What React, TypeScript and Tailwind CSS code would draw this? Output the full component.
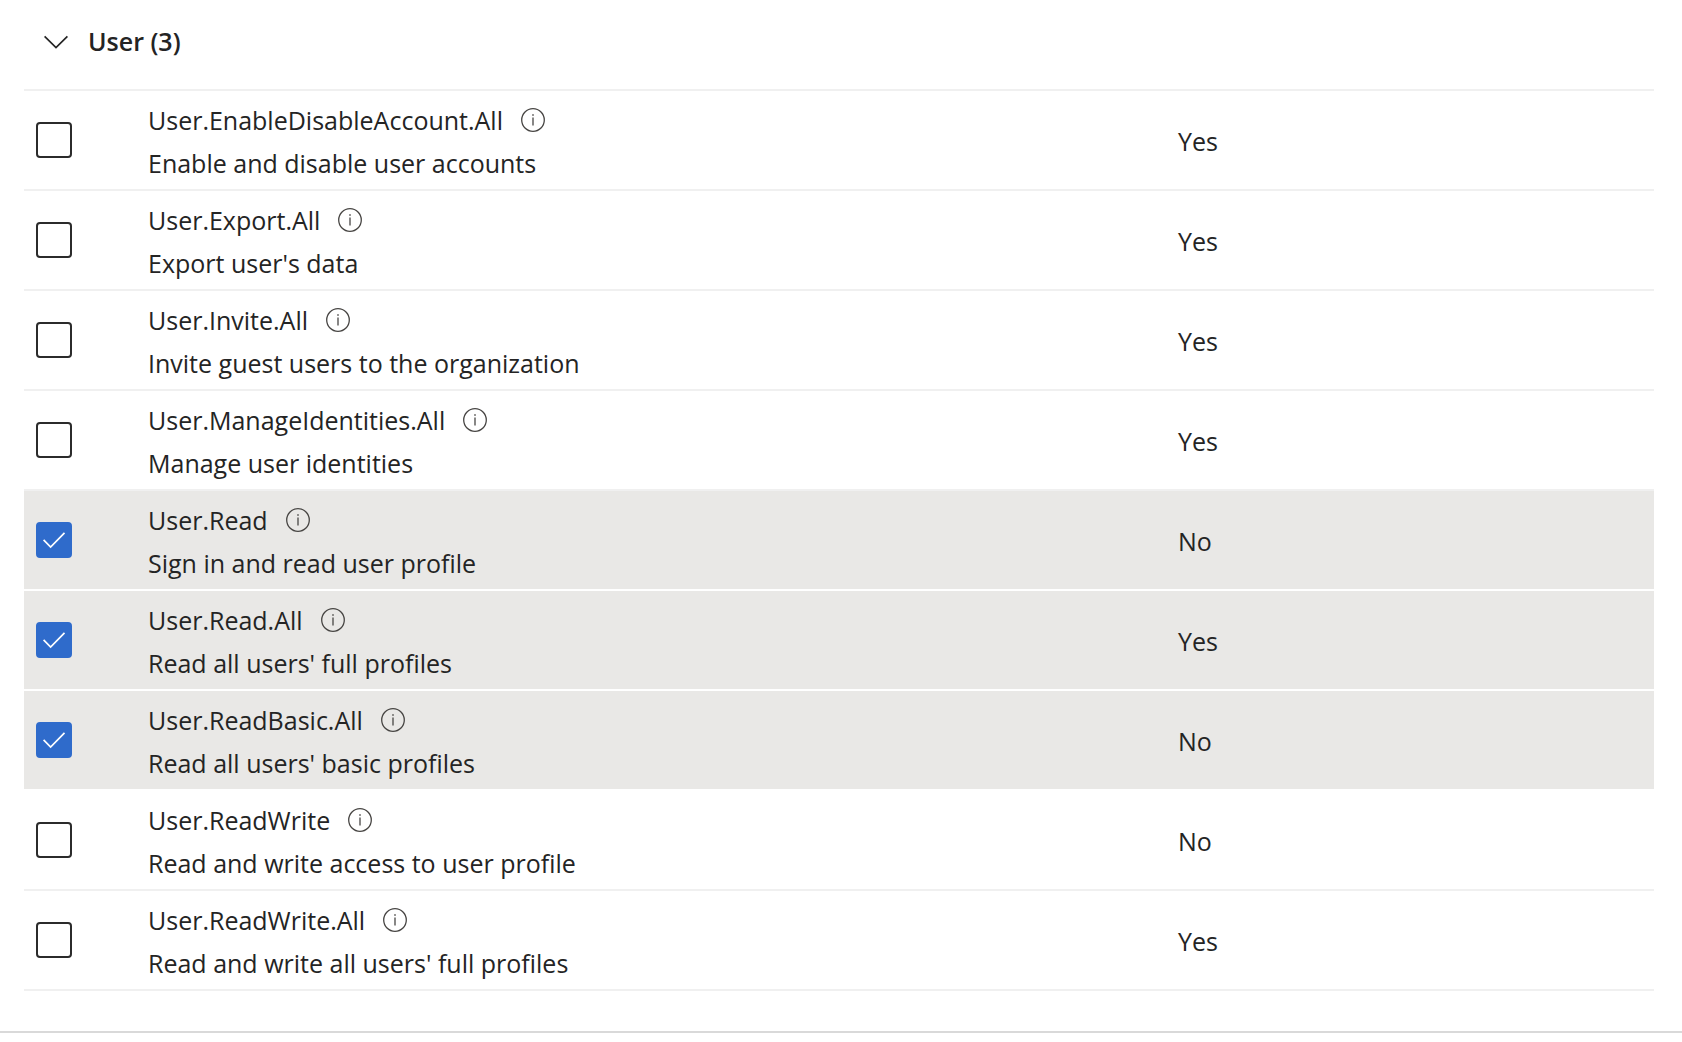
import { useState } from "react";

type Permission = {
  name: string;
  description: string;
  consent: "Yes" | "No";
  granted: boolean;
};

const permissions: Permission[] = [
  { name: "User.EnableDisableAccount.All", description: "Enable and disable user accounts", consent: "Yes", granted: false },
  { name: "User.Export.All", description: "Export user's data", consent: "Yes", granted: false },
  { name: "User.Invite.All", description: "Invite guest users to the organization", consent: "Yes", granted: false },
  { name: "User.ManageIdentities.All", description: "Manage user identities", consent: "Yes", granted: false },
  { name: "User.Read", description: "Sign in and read user profile", consent: "No", granted: true },
  { name: "User.Read.All", description: "Read all users' full profiles", consent: "Yes", granted: true },
  { name: "User.ReadBasic.All", description: "Read all users' basic profiles", consent: "No", granted: true },
  { name: "User.ReadWrite", description: "Read and write access to user profile", consent: "No", granted: false },
  { name: "User.ReadWrite.All", description: "Read and write all users' full profiles", consent: "Yes", granted: false },
];

function ChevronIcon() {
  return (
    <svg className="h-6 w-6" viewBox="0 0 24 24" fill="none" stroke="currentColor" strokeWidth="1.7" aria-hidden="true">
      <path d="M0.6 6.4 12 17.6 23.4 6.4" />
    </svg>
  );
}

function InfoIcon() {
  return (
    <svg className="h-6 w-6" viewBox="0 0 24 24" fill="none" stroke="currentColor" aria-hidden="true">
      <circle cx="12" cy="12" r="11.3" strokeWidth="1.3" />
      <path d="M12 9.6V17.4" strokeWidth="1.3" />
      <path d="M12 6.2V7.8" strokeWidth="1.5" />
    </svg>
  );
}

function CheckIcon() {
  return (
    <svg
      className="pointer-events-none absolute inset-0 h-9 w-9 text-white"
      viewBox="0 0 36 36"
      fill="none"
      stroke="currentColor"
      strokeWidth="1.7"
      aria-hidden="true"
    >
      <path d="M7.6 17.9 14.6 25 28.5 10.8" />
    </svg>
  );
}

function PermissionRow({ item, id }: { item: Permission; id: string }) {
  const [checked, setChecked] = useState(item.granted);
  return (
    <tr className={checked ? "border-b-2 border-white bg-[#e9e8e6]" : "border-b-2 border-[#f0f0f0]"}>
      <td className="pl-3 align-middle">
        <div className="relative h-9 w-9">
          <input
            id={id}
            type="checkbox"
            checked={checked}
            onChange={(event) => setChecked(event.target.checked)}
            className="block h-9 w-9 appearance-none rounded border-2 border-[#2b2b2b] bg-white checked:border-[#2f6bcb] checked:bg-[#2f6bcb]"
          />
          {checked && <CheckIcon />}
        </div>
      </td>
      <td className="pt-2 pb-1">
        <div className="flex items-center gap-[18px] leading-[43px]">
          <label htmlFor={id}>{item.name}</label>
          <button type="button" aria-label={`About ${item.name}`} className="pb-0.5 text-[#484644]">
            <InfoIcon />
          </button>
        </div>
        <p className="leading-[43px]">{item.description}</p>
      </td>
      <td className="pt-0.5 align-middle leading-[43px]">{item.consent}</td>
    </tr>
  );
}

export default function App() {
  const [open, setOpen] = useState(true);
  const granted = permissions.filter((item) => item.granted).length;
  return (
    <div className="min-h-screen bg-white font-['Open_Sans',sans-serif] text-[25px] text-[#242424]">
      <section className="border-b-2 border-[#d9d9d9] pr-7 pb-10 pl-6">
        <h2>
          <button
            type="button"
            aria-expanded={open}
            onClick={() => setOpen(!open)}
            className="flex h-[89px] items-center gap-5 pb-1.5 pl-5 font-semibold"
          >
            <ChevronIcon />
            <span>User ({granted})</span>
          </button>
        </h2>
        {open && (
          <table className="w-full table-fixed border-collapse border-t-2 border-[#f0f0f0]">
            <colgroup>
              <col className="w-[124px]" />
              <col />
              <col className="w-[476px]" />
            </colgroup>
            <tbody>
              {permissions.map((item, index) => (
                <PermissionRow key={item.name} item={item} id={`permission-${index}`} />
              ))}
            </tbody>
          </table>
        )}
      </section>
    </div>
  );
}
